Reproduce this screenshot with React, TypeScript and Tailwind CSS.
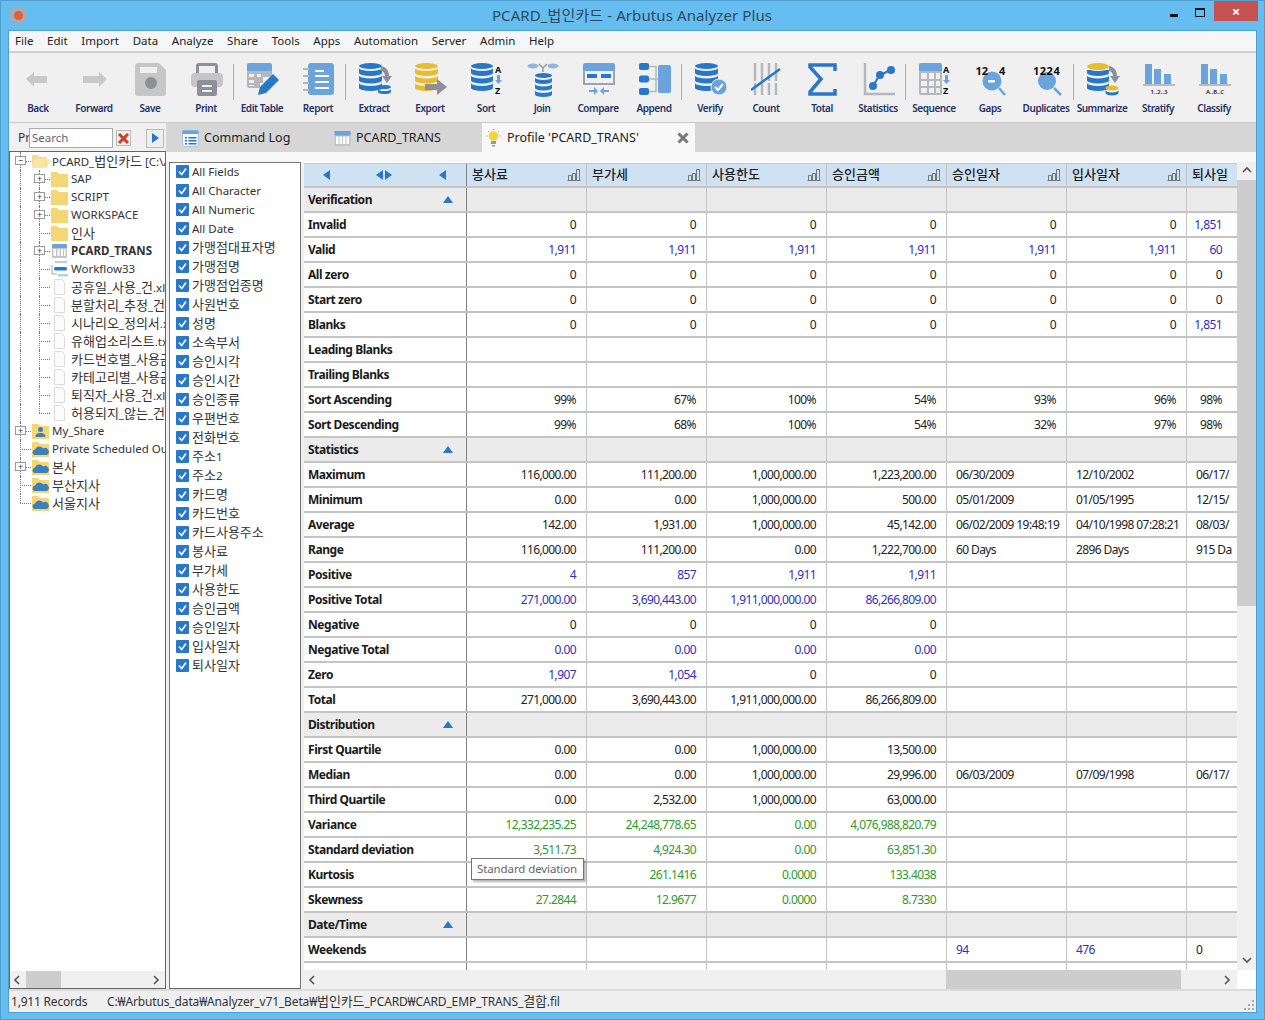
import type { ReactNode } from 'react';

const SANS = '"Noto Sans", "Noto Sans CJK KR", sans-serif';
const BLUE = '#2877c8';
const MID = '#6ba3dc';
const GOLD = '#e8bc2e';
const GREY = '#8d9098';

// stacked database drawing, used by most of the toolbar icons
function Db({ x, y, w, c, bands = 3, h = 6 }: { x: number; y: number; w: number; c: string; bands?: number; h?: number }) {
  const r = w / 2;
  const ry = h * 0.5;
  return (
    <g fill={c}>
      <ellipse cx={x + r} cy={y + ry} rx={r} ry={ry} />
      {Array.from({ length: bands }).map((_, i) => {
        const top = y + ry + 2 + i * (h + 1.5);
        return <path key={i} d={`M${x} ${top}a${r} ${ry} 0 0 0 ${w} 0v${h - 1}a${r} ${ry} 0 0 1 -${w} 0z`} />;
      })}
    </g>
  );
}

const Arrow = ({ d, c = GREY }: { d: string; c?: string }) => <path d={d} fill={c} />;

// hangul runs are drawn a size larger than the latin text next to them
function Ko({ text }: { text: string }) {
  return (
    <>
      {text.split(/([가-힣]+)/).map((part, i) =>
        /[가-힣]/.test(part) ? (
          <span key={i} className="text-[13px]">
            {part}
          </span>
        ) : (
          part
        ),
      )}
    </>
  );
}

function SortMark() {
  return (
    <g>
      <text x="24" y="10" fontSize="9" fontWeight="700" fill="#111" fontFamily={SANS}>A</text>
      <path d="M26 12h3v5h2l-3.500 4-3.500-4h2z" fill={MID} />
      <text x="24" y="31" fontSize="9" fontWeight="700" fill="#111" fontFamily={SANS}>Z</text>
    </g>
  );
}

function BarsMark({ label }: { label: string }) {
  return (
    <g>
      <rect x="2" y="1" width="7" height="20" fill={MID} />
      <rect x="11" y="6" width="7" height="15" fill={MID} />
      <rect x="21" y="11" width="7" height="10" fill={MID} />
      <rect x="0" y="21" width="32" height="2" fill="#bbb" />
      <text x="16" y="31" fontSize="6" fontWeight="600" textAnchor="middle" fill="#222" fontFamily={SANS}>{label}</text>
    </g>
  );
}

const TOOL_ICONS: Record<string, ReactNode> = {
  Back: <Arrow c="#c9c9c9" d="M3 16l8-7v4h13v7H11v4z" />,
  Forward: <Arrow c="#c9c9c9" d="M28 16l-8-7v4H4v7h16v4z" />,
  Save: (
    <g>
      <path d="M3 0h21l7 7v23a3 3 0 0 1-3 3H3a3 3 0 0 1-3-3V3a3 3 0 0 1 3-3z" fill="#c6c6c6" />
      <rect x="5" y="4" width="17" height="6" fill="#f0f0f0" />
      <circle cx="16" cy="20" r="6" fill={GREY} />
    </g>
  ),
  Print: (
    <g>
      <path d="M5 11V3a3 3 0 0 1 3-3h16a3 3 0 0 1 3 3v8h-3V3H8v8z" fill={GREY} />
      <rect x="0" y="10" width="32" height="14" rx="4" fill="#c6c6c6" />
      <rect x="6" y="17" width="20" height="16" rx="2" fill={GREY} />
      <rect x="11" y="22" width="10" height="2" fill="#f0f0f0" />
      <rect x="11" y="27" width="10" height="2" fill="#f0f0f0" />
    </g>
  ),
  'Edit Table': (
    <g>
      <path d="M2 0h21a2 2 0 0 1 2 2v6H0V2a2 2 0 0 1 2-2z" fill={MID} />
      <path d="M0 8h25v6h-9v6h-3v5H2a2 2 0 0 1-2-2zM2 11v3h5v-3zM10 11v3h4v-3zM2 17v3h5v-3zM2 22v1h5v-1z" fill="#b5b7bb" fillRule="evenodd" />
      <path d="M11 32l2-8 13-13 6 6-13 13z" fill={BLUE} />
    </g>
  ),
  Report: (
    <g>
      <rect x="5" y="0" width="26" height="32" rx="3" fill={MID} />
      <rect x="12" y="7" width="9" height="2" fill="#fff" />
      <rect x="12" y="12" width="14" height="2" fill="#fff" />
      <rect x="12" y="18" width="14" height="2" fill="#fff" />
      <rect x="12" y="24" width="14" height="2" fill="#fff" />
      <path d="M0 5h6v2H0zM0 12h6v2H0zM0 19h6v2H0zM0 26h6v2H0z" fill="#b5b7bb" />
    </g>
  ),
  Extract: (
    <g>
      <Db x={0} y={0} w={23} c={BLUE} />
      <Arrow d="M22 3c5 1 8 4 8 10h3l-5 7-5-7h3c0-3-2-5-4-5z" />
      <Db x={19} y={22} w={13} c={BLUE} bands={1} h={4} />
    </g>
  ),
  Export: (
    <g>
      <Db x={0} y={0} w={23} c={GOLD} />
      <Arrow d="M10 21h12v-5l10 8-10 8v-5H10z" />
    </g>
  ),
  Sort: (
    <g>
      <Db x={0} y={0} w={22} c={BLUE} />
      <SortMark />
    </g>
  ),
  Join: (
    <g>
      <ellipse cx="6" cy="3" rx="5.500" ry="2.500" fill="#8fb6e0" />
      <ellipse cx="26" cy="3" rx="5.500" ry="2.500" fill="#8fb6e0" />
      <path d="M12 1l4 4 4-4M16 5v4" stroke="#999" strokeWidth="1.500" fill="none" />
      <Db x={8} y={10} w={17} c={BLUE} h={5} />
    </g>
  ),
  Compare: (
    <g>
      <path d="M3 0h26a3 3 0 0 1 3 3v19H0V3a3 3 0 0 1 3-3z" fill="#9fa3ab" />
      <rect x="0" y="0" width="32" height="8" rx="3" fill={MID} />
      <rect x="2" y="8" width="28" height="12" fill="#f0f0f0" />
      <rect x="4" y="11" width="10" height="4" fill={BLUE} />
      <rect x="18" y="11" width="10" height="4" fill={BLUE} />
      <path d="M6 27h5v-3l4 4-4 4v-3H6zM26 27h-5v-3l-4 4 4 4v-3h5z" fill={MID} />
    </g>
  ),
  Append: (
    <g>
      <rect x="0" y="0" width="10" height="7" rx="2" fill={BLUE} />
      <rect x="0" y="12.500" width="10" height="7" rx="2" fill={BLUE} />
      <rect x="0" y="25" width="10" height="7" rx="2" fill={BLUE} />
      <path d="M10 3.500h7v25h-7M10 16h10" stroke="#b5b7bb" strokeWidth="1.500" fill="none" />
      <rect x="19" y="2" width="13" height="28" rx="2" fill={MID} />
    </g>
  ),
  Verify: (
    <g>
      <Db x={0} y={0} w={23} c={BLUE} />
      <circle cx="24" cy="24" r="8" fill={MID} stroke="#f0f0f0" strokeWidth="1" />
      <path d="M20 24l3 3 5-6" stroke="#fff" strokeWidth="2" fill="none" />
    </g>
  ),
  Count: (
    <g>
      <path d="M4 0v32M11 0v32M18 0v32M25 0v32" stroke="#b5b7bb" strokeWidth="2.500" strokeDasharray="18 2 12" />
      <path d="M0 27L29 6" stroke={BLUE} strokeWidth="2.500" />
    </g>
  ),
  Total: <path d="M28 8V2H3v2l11 12L3 29v2h25v-5" stroke={BLUE} strokeWidth="3.500" fill="none" />,
  Statistics: (
    <g>
      <path d="M2 0v31h30" stroke="#b5b7bb" strokeWidth="2.500" fill="none" />
      <path d="M10 23l6-10 11-6" stroke={BLUE} strokeWidth="2" fill="none" />
      <circle cx="10" cy="23" r="4" fill={BLUE} />
      <circle cx="17" cy="12" r="4" fill={BLUE} />
      <circle cx="28" cy="7" r="4" fill={BLUE} />
    </g>
  ),
  Sequence: (
    <g>
      <path d="M2 0h19a2 2 0 0 1 2 2v6H0V2a2 2 0 0 1 2-2z" fill={MID} />
      <path d="M0 8h23v22a2 2 0 0 1-2 2H2a2 2 0 0 1-2-2z" fill="#b5b7bb" />
      <path d="M2 10h6v6H2zM10 10h5v6h-5zM17 10h4v6h-4zM2 18h6v5H2zM10 18h5v5h-5zM17 18h4v5h-4zM2 25h6v5H2zM10 25h5v5h-5zM17 25h4v5h-4z" fill="#f0f0f0" />
      <SortMark />
    </g>
  ),
  Gaps: (
    <g>
      <circle cx="17" cy="18" r="9.500" fill={MID} />
      <rect x="13" y="17" width="7" height="2.500" rx="1" fill="#fff" />
      <path d="M24 25l6 7" stroke={MID} strokeWidth="2.500" />
      <text x="0.500" y="12" fontSize="11" fontWeight="700" fill="#111" fontFamily={SANS}>12</text>
      <text x="24" y="12" fontSize="11" fontWeight="700" fill="#111" fontFamily={SANS}>4</text>
    </g>
  ),
  Duplicates: (
    <g>
      <circle cx="16" cy="18" r="9" fill={MID} />
      <path d="M23 25l7 7" stroke={MID} strokeWidth="2.500" />
      <text x="2" y="12" fontSize="11" fontWeight="700" letterSpacing="0.500" fill="#111" fontFamily={SANS}>1224</text>
    </g>
  ),
  Summarize: (
    <g>
      <Db x={0} y={0} w={22} c={BLUE} />
      <path d="M0 0h22v7H0z" fill="#f0f0f0" />
      <ellipse cx="11" cy="3.500" rx="11" ry="3.500" fill={GOLD} />
      <Arrow d="M22 3c5 1 8 4 8 10h3l-5 7-5-7h3c0-3-2-5-4-5z" />
      <ellipse cx="25" cy="25" rx="6.500" ry="2.500" fill={GOLD} />
      <path d="M18.500 27a6.500 2.500 0 0 0 13 0v3a6.500 2.500 0 0 1-13 0z" fill={BLUE} />
    </g>
  ),
  Stratify: <BarsMark label="1..2..3" />,
  Classify: <BarsMark label="A..B..C" />,
};

const TOOLS: { label: string; sep?: boolean }[] = [
  { label: 'Back' }, { label: 'Forward' }, { label: 'Save' }, { label: 'Print', sep: true },
  { label: 'Edit Table' }, { label: 'Report', sep: true }, { label: 'Extract' }, { label: 'Export' },
  { label: 'Sort' }, { label: 'Join' }, { label: 'Compare' }, { label: 'Append', sep: true },
  { label: 'Verify' }, { label: 'Count' }, { label: 'Total' }, { label: 'Statistics', sep: true },
  { label: 'Sequence' }, { label: 'Gaps' }, { label: 'Duplicates', sep: true }, { label: 'Summarize' },
  { label: 'Stratify' }, { label: 'Classify' },
];

const MENU = ['File', 'Edit', 'Import', 'Data', 'Analyze', 'Share', 'Tools', 'Apps', 'Automation', 'Server', 'Admin', 'Help'];

const FIELDS = ['All Fields', 'All Character', 'All Numeric', 'All Date', '가맹점대표자명', '가맹점명', '가맹점업종명', '사원번호', '성명', '소속부서', '승인시각', '승인시간', '승인종류', '우편번호', '전화번호', '주소1', '주소2', '카드명', '카드번호', '카드사용주소', '봉사료', '부가세', '사용한도', '승인금액', '승인일자', '입사일자', '퇴사일자'];

const COLUMNS = ['봉사료', '부가세', '사용한도', '승인금액', '승인일자', '입사일자', '퇴사일'];

type TreeItem = { label: string; level: 0 | 1; kind: 'open' | 'folder' | 'table' | 'flow' | 'file' | 'user' | 'cloud'; plus?: boolean; minus?: boolean; bold?: boolean };

const TREE: TreeItem[] = [
  { label: 'PCARD_법인카드 [C:\\Arbutus]', level: 0, kind: 'open', minus: true },
  { label: 'SAP', level: 1, kind: 'folder', plus: true },
  { label: 'SCRIPT', level: 1, kind: 'folder', plus: true },
  { label: 'WORKSPACE', level: 1, kind: 'folder', plus: true },
  { label: '인사', level: 1, kind: 'folder' },
  { label: 'PCARD_TRANS', level: 1, kind: 'table', plus: true, bold: true },
  { label: 'Workflow33', level: 1, kind: 'flow' },
  { label: '공휴일_사용_건.xlsx', level: 1, kind: 'file' },
  { label: '분할처리_추정_건.xlsx', level: 1, kind: 'file' },
  { label: '시나리오_정의서.xlsx', level: 1, kind: 'file' },
  { label: '유해업소리스트.txt', level: 1, kind: 'file' },
  { label: '카드번호별_사용금액.xlsx', level: 1, kind: 'file' },
  { label: '카테고리별_사용금액.xlsx', level: 1, kind: 'file' },
  { label: '퇴직자_사용_건.xlsx', level: 1, kind: 'file' },
  { label: '허용되지_않는_건.xlsx', level: 1, kind: 'file' },
  { label: 'My_Share', level: 0, kind: 'user', plus: true },
  { label: 'Private Scheduled Output', level: 0, kind: 'cloud' },
  { label: '본사', level: 0, kind: 'cloud', plus: true },
  { label: '부산지사', level: 0, kind: 'cloud' },
  { label: '서울지사', level: 0, kind: 'cloud' },
];

type Tone = 'k' | 'b' | 'g';
type Row = { label: string; section?: boolean; tone?: Tone; tones?: Tone[]; left?: number[]; cells?: string[] };

const ROWS: Row[] = [
  { label: 'Verification', section: true },
  { label: 'Invalid', cells: ['0', '0', '0', '0', '0', '0', '1,851'], tones: ['k', 'k', 'k', 'k', 'k', 'k', 'b'] },
  { label: 'Valid', tone: 'b', cells: ['1,911', '1,911', '1,911', '1,911', '1,911', '1,911', '60'] },
  { label: 'All zero', cells: ['0', '0', '0', '0', '0', '0', '0'] },
  { label: 'Start zero', cells: ['0', '0', '0', '0', '0', '0', '0'] },
  { label: 'Blanks', cells: ['0', '0', '0', '0', '0', '0', '1,851'], tones: ['k', 'k', 'k', 'k', 'k', 'k', 'b'] },
  { label: 'Leading Blanks' },
  { label: 'Trailing Blanks' },
  { label: 'Sort Ascending', cells: ['99%', '67%', '100%', '54%', '93%', '96%', '98%'] },
  { label: 'Sort Descending', cells: ['99%', '68%', '100%', '54%', '32%', '97%', '98%'] },
  { label: 'Statistics', section: true },
  { label: 'Maximum', left: [4, 5, 6], cells: ['116,000.00', '111,200.00', '1,000,000.00', '1,223,200.00', '06/30/2009', '12/10/2002', '06/17/'] },
  { label: 'Minimum', left: [4, 5, 6], cells: ['0.00', '0.00', '1,000,000.00', '500.00', '05/01/2009', '01/05/1995', '12/15/'] },
  { label: 'Average', left: [4, 5, 6], cells: ['142.00', '1,931.00', '1,000,000.00', '45,142.00', '06/02/2009 19:48:19', '04/10/1998 07:28:21', '08/03/'] },
  { label: 'Range', left: [4, 5, 6], cells: ['116,000.00', '111,200.00', '0.00', '1,222,700.00', '60 Days', '2896 Days', '915 Da'] },
  { label: 'Positive', tone: 'b', cells: ['4', '857', '1,911', '1,911'] },
  { label: 'Positive Total', tone: 'b', cells: ['271,000.00', '3,690,443.00', '1,911,000,000.00', '86,266,809.00'] },
  { label: 'Negative', cells: ['0', '0', '0', '0'] },
  { label: 'Negative Total', tone: 'b', cells: ['0.00', '0.00', '0.00', '0.00'] },
  { label: 'Zero', cells: ['1,907', '1,054', '0', '0'], tones: ['b', 'b', 'k', 'k'] },
  { label: 'Total', cells: ['271,000.00', '3,690,443.00', '1,911,000,000.00', '86,266,809.00'] },
  { label: 'Distribution', section: true },
  { label: 'First Quartile', cells: ['0.00', '0.00', '1,000,000.00', '13,500.00'] },
  { label: 'Median', left: [4, 5, 6], cells: ['0.00', '0.00', '1,000,000.00', '29,996.00', '06/03/2009', '07/09/1998', '06/17/'] },
  { label: 'Third Quartile', cells: ['0.00', '2,532.00', '1,000,000.00', '63,000.00'] },
  { label: 'Variance', tone: 'g', cells: ['12,332,235.25', '24,248,778.65', '0.00', '4,076,988,820.79'] },
  { label: 'Standard deviation', tone: 'g', cells: ['3,511.73', '4,924.30', '0.00', '63,851.30'] },
  { label: 'Kurtosis', tone: 'g', cells: ['', '261.1416', '0.0000', '133.4038'] },
  { label: 'Skewness', tone: 'g', cells: ['27.2844', '12.9677', '0.0000', '8.7330'] },
  { label: 'Date/Time', section: true },
  { label: 'Weekends', left: [4, 5, 6], cells: ['', '', '', '', '94', '476', '0'], tones: ['k', 'k', 'k', 'k', 'b', 'b', 'k'] },
  { label: '' },
];

const TONE_CLASS: Record<Tone, string> = { k: 'text-[#222]', b: 'text-[#2f2fc0]', g: 'text-[#2c9a2c]' };

const colWidth = (i: number) => (i === 6 ? 'w-[50px]' : 'w-[120px]');

function ToolIcon({ label }: { label: string }) {
  return (
    <svg width="33" height="34" viewBox="0 0 33 34" className="ml-[2px]">
      {TOOL_ICONS[label]}
    </svg>
  );
}

function MiniChart() {
  return (
    <svg width="14" height="12" viewBox="0 0 14 12" fill="none" stroke="#777" strokeWidth="1">
      <path d="M.5 11.500h13M1.500 11.500v-5h3v5M5.500 11.500v-7h3v7M9.500 11.500v-11h3v11" />
    </svg>
  );
}

function Triangle({ dir }: { dir: 'left' | 'right' | 'up' }) {
  const d = dir === 'left' ? 'M8 0v10L1 5z' : dir === 'right' ? 'M1 0v10l7-5z' : 'M5 1l5 7H0z';
  return (
    <svg width="9" height="10" viewBox="0 0 9 10" className={dir === 'up' ? 'w-[11px]' : ''}>
      <path d={d} fill={BLUE} />
    </svg>
  );
}

function Chevron({ dir }: { dir: 'left' | 'right' | 'up' | 'down' }) {
  const d = { left: 'M6 1L2 5l4 4', right: 'M2 1l4 4-4 4', up: 'M1 6l4-4 4 4', down: 'M1 2l4 4 4-4' }[dir];
  return (
    <svg width="10" height="10" viewBox="0 0 10 10" fill="none" stroke="#555" strokeWidth="1.600">
      <path d={d} />
    </svg>
  );
}

function TreeIcon({ kind }: { kind: TreeItem['kind'] }) {
  if (kind === 'file') {
    return (
      <svg width="19" height="18" viewBox="0 0 19 18">
        <path d="M4.500 1.500h7l3 3v12h-10z" fill="#fbfbfb" stroke="#dcdcdc" />
      </svg>
    );
  }
  if (kind === 'table') {
    return (
      <svg width="19" height="18" viewBox="0 0 19 18">
        <rect x="2" y="2" width="15" height="14" rx="1.500" fill="#c2c4c8" />
        <rect x="2" y="2" width="15" height="4" rx="1" fill={MID} />
        <path d="M3.500 7h2.500v7H3.500zM7.500 7h2v7h-2zM11 7h2v7h-2zM14 7h1.500v7H14z" fill="#fff" />
      </svg>
    );
  }
  if (kind === 'flow') {
    return (
      <svg width="19" height="18" viewBox="0 0 19 18">
        <rect x="5" y="1" width="12" height="2" fill="#b9cfe8" />
        <rect x="4" y="7" width="13" height="3.500" rx="1.500" fill={BLUE} />
        <rect x="8" y="14" width="10" height="2.500" fill="#b9cfe8" />
        <path d="M2 5v9h5" stroke="#aaa" fill="none" />
      </svg>
    );
  }
  if (kind === 'open') {
    return (
      <svg width="19" height="18" viewBox="0 0 19 18">
        <path d="M1 3h6l2 2h7v3H4L1 15z" fill="#f4dc9c" />
        <path d="M4 7h15l-3 9H1z" fill="#f9e3a6" />
      </svg>
    );
  }
  return (
    <svg width="19" height="18" viewBox="0 0 19 18">
      <path d="M1 2h6l2 2h9v13H1z" fill="#f5d675" />
      {kind === 'user' && <path d="M9.500 5a2.500 2.500 0 1 1 0 5 2.500 2.500 0 0 1 0-5zM4.500 15c0-3 2-4 5-4s5 1 5 4z" fill="#3d7fb8" />}
      {kind === 'cloud' && <path d="M3 15a3 3 0 0 1 1-5.500 4.500 4.500 0 0 1 8-1 3.500 3.500 0 0 1 4 6.500z" fill="#3d7fb8" />}
    </svg>
  );
}

function TreeRow({ item, last }: { item: TreeItem; last: boolean }) {
  const markX = item.level === 0 ? 'left-[5px]' : 'left-[24px]';
  return (
    <div className="relative flex h-[18px] items-center whitespace-nowrap leading-none">
      <span className={`absolute left-[10px] top-0 w-0 border-l border-dotted border-[#777] ${last ? 'h-[9px]' : 'h-[18px]'}`} />
      {item.level === 1 && (
        <span className={`absolute left-[29px] top-0 w-0 border-l border-dotted border-[#777] ${item.label.startsWith('허용') ? 'h-[9px]' : 'h-[18px]'}`} />
      )}
      <span className={`absolute top-[9px] h-0 border-t border-dotted border-[#777] ${item.level === 0 ? 'left-[10px] w-[11px]' : 'left-[29px] w-[11px]'}`} />
      {(item.plus || item.minus) && (
        <span className={`absolute top-[4px] flex h-[9px] w-[11px] items-center justify-center border border-[#999] bg-white text-[9px] leading-none text-[#333] ${markX}`}>
          {item.minus ? '−' : '+'}
        </span>
      )}
      <span className={`${item.level === 0 ? 'ml-[21px]' : 'ml-[40px]'} relative flex h-[18px] shrink-0 items-center`}>
        <TreeIcon kind={item.kind} />
      </span>
      <span className={`ml-[2px] text-[11.500px] text-[#333] ${item.bold ? 'font-bold text-[#111]' : ''}`}>
        <Ko text={item.label} />
      </span>
    </div>
  );
}

function GridRow({ row }: { row: Row }) {
  const rowBg = row.section ? 'bg-[#ebebeb]' : 'bg-white';
  return (
    <div className={`flex h-[25px] shrink-0 border-b-2 border-[#c4c4c4] ${rowBg}`}>
      <div className="flex w-[163px] shrink-0 items-center justify-between border-r border-[#808080] pl-[4px] pr-[13px] text-[12px] font-bold tracking-[-0.45px] text-[#1a1a1a]">
        <span>{row.label}</span>
        {row.section && <Triangle dir="up" />}
      </div>
      {COLUMNS.map((_, i) => {
        const left = row.left?.includes(i);
        const tone = row.tones?.[i] ?? row.tone ?? 'k';
        return (
          <div
            key={i}
            className={`flex shrink-0 items-center overflow-hidden whitespace-nowrap text-[12px] tracking-[-0.6px] ${colWidth(i)} ${i < 6 ? 'border-r border-[#c4c4c4]' : ''} ${left ? 'justify-start pl-[9px]' : i === 6 ? 'justify-end pr-[15px]' : 'justify-end pr-[10px]'} ${TONE_CLASS[tone]}`}
          >
            {row.cells?.[i]}
          </div>
        );
      })}
    </div>
  );
}

export default function App() {
  return (
    <div className="flex h-[1020px] w-[1265px] flex-col overflow-hidden border border-[#4f9fd0] bg-[#65bdf0] text-[12px]" style={{ fontFamily: SANS }}>
      {/* title bar */}
      <div className="relative flex h-[29px] shrink-0 items-center justify-center pb-[1px] text-[15px] text-[#2b4a60]">
        <span className="absolute left-[9px] top-[6px] flex h-[16px] w-[16px] items-center justify-center rounded-full border-2 border-[#d89a8a]">
          <span className="h-[9px] w-[9px] rounded-full bg-[#f05a28]" />
        </span>
        <span className="ml-[-1px] tracking-[0.1px]">PCARD_법인카드 - Arbutus Analyzer Plus</span>
        <div className="absolute right-[6px] top-0 flex items-start">
          <span className="mr-[17px] mt-[13px] h-[3px] w-[8px] bg-[#111]" />
          <span className="mr-[9px] mt-[7px] h-[9px] w-[10px] border border-t-2 border-[#111]" />
          <span className="flex h-[20px] w-[44px] items-center justify-center bg-[#c75050] text-[15px] font-bold leading-none text-white">×</span>
        </div>
      </div>

      <div className="mx-[7px] flex min-h-0 flex-1 flex-col border border-[#4f9fd0] bg-[#f0f0f0]">
        {/* menu */}
        <div className="flex h-[20px] shrink-0 items-center gap-[13.700px] bg-[#f5f6f7] pl-[6px] text-[11.500px] text-[#222]">
          {MENU.map((m) => (
            <span key={m}>{m}</span>
          ))}
        </div>

        {/* toolbar */}
        <div className="flex h-[72px] shrink-0 border-b border-[#c8c8c8] border-t-2 border-t-[#d0d0d0] pl-[1px] pt-[10px]">
          {TOOLS.map((t) => (
            <div key={t.label} className="relative flex w-[56px] shrink-0 flex-col items-center">
              <div className="h-[34px]">
                <ToolIcon label={t.label} />
              </div>
              <span className="mt-[4px] whitespace-nowrap text-[10px] font-semibold tracking-[-0.45px] text-[#223366]">{t.label}</span>
              {t.sep && <span className="absolute right-0 top-[1px] h-[36px] w-px bg-[#b0aca8]" />}
            </div>
          ))}
        </div>

        {/* main area */}
        <div className="flex min-h-0 flex-1">
          {/* project pane */}
          <div className="flex w-[157px] shrink-0 flex-col">
            <div className="flex h-[28px] shrink-0 items-center bg-[#f0f0f0] pl-[9px] pt-[2px] text-[12px] text-[#333]">
              <span className="w-[11px] overflow-hidden">Pr</span>
              <div className="flex h-[20px] w-[84px] items-center border border-[#aaa] bg-white pl-[2px] text-[11.500px] text-[#666]">Search</div>
              <div className="ml-[3px] flex h-[16px] w-[15px] items-center justify-center border border-[#bbb] bg-[#eee]">
                <svg width="11" height="11" viewBox="0 0 11 11" stroke="#d23a2a" strokeWidth="3">
                  <path d="M1 1l9 9M10 1l-9 9" />
                </svg>
              </div>
              <div className="ml-[15px] flex h-[19px] w-[18px] items-center justify-center border border-[#bbb] bg-[#eee]">
                <Triangle dir="right" />
              </div>
            </div>
            <div className="flex min-h-0 flex-1 flex-col border border-[#666] bg-white">
              <div className="min-h-0 flex-1 overflow-hidden">
                {TREE.map((item, i) => (
                  <TreeRow key={item.label} item={item} last={i === TREE.length - 1} />
                ))}
              </div>
              <div className="flex h-[17px] shrink-0 items-center bg-[#f0f0f0]">
                <span className="flex w-[16px] justify-center"><Chevron dir="left" /></span>
                <span className="h-full w-[35px] bg-[#cdcdcd]" />
                <span className="flex-1" />
                <span className="flex w-[16px] justify-center"><Chevron dir="right" /></span>
              </div>
            </div>
          </div>

          <div className="flex min-w-0 flex-1 flex-col">
            {/* tabs */}
            <div className="flex h-[29px] shrink-0 items-stretch bg-[#d6d6d6] pt-[1px] text-[12.500px] text-[#222]">
              <div className="flex w-[168px] items-center pl-[16px]">
                <svg width="17" height="17" viewBox="0 0 17 17" className="mr-[5px]">
                  <rect x="0.500" y="0.500" width="16" height="16" rx="1.500" fill="#f4f7fb" stroke="#a9c3e0" />
                  <rect x="0.500" y="0.500" width="16" height="3.500" fill={MID} />
                  <path d="M3 7h2v1.500H3zM6.500 7h8v1.500h-8zM3 10h2v1.500H3zM6.500 10h8v1.500h-8zM3 13h2v1.500H3zM6.500 13h8v1.500h-8z" fill={BLUE} />
                </svg>
                Command Log
              </div>
              <div className="flex w-[148px] items-center">
                <svg width="17" height="17" viewBox="0 0 17 17" className="mr-[5px]">
                  <rect x="0.500" y="1" width="16" height="15" rx="1.500" fill="#c2c4c8" />
                  <rect x="0.500" y="1" width="16" height="4.500" fill={MID} />
                  <path d="M2 6.500h2.500V14H2zM5.500 6.500H8V14H5.500zM9 6.500h2.500V14H9zM12.500 6.500H15V14h-2.500z" fill="#fff" />
                </svg>
                PCARD_TRANS
              </div>
              <div className="mt-[-1px] flex w-[213px] items-center bg-[#f8f8f8] pl-[3px] pt-[1px]">
                <svg width="17" height="19" viewBox="0 0 17 19" className="mr-[5px]">
                  <circle cx="8.500" cy="7" r="4.800" fill="#f6d23c" />
                  <path d="M6 12h5v3H6z" fill="#8e9aa8" />
                  <path d="M7 16h3v1.500H7z" fill={MID} />
                  <path d="M1 7h1.500M14.500 7H16M3 2l1 1M14 2l-1 1M8.500 0v1" stroke="#c5a83a" />
                </svg>
                Profile 'PCARD_TRANS'
                <svg width="12" height="12" viewBox="0 0 12 12" stroke="#777" strokeWidth="3" className="ml-[38px]">
                  <path d="M1.500 1.500l9 9M10.500 1.500l-9 9" />
                </svg>
              </div>
            </div>
            <div className="h-[10px] shrink-0 bg-[#f8f8f8]" />

            <div className="flex min-h-0 flex-1 pl-[3px]">
              {/* field list */}
              <div className="w-[132px] shrink-0 overflow-hidden border border-b-[#666] border-[#777] bg-white pl-[6px]">
                <div className="-mt-px">
                  {FIELDS.map((f) => (
                    <div key={f} className="flex h-[19px] items-center gap-[3px] whitespace-nowrap text-[11.500px] leading-none text-[#333]">
                      <svg width="13" height="13" viewBox="0 0 13 13" className="shrink-0">
                        <rect width="13" height="13" rx="1" fill={BLUE} />
                        <path d="M3 6.500l2.700 3L10 3.500" stroke="#fff" strokeWidth="1.600" fill="none" />
                      </svg>
                      <span><Ko text={f} /></span>
                    </div>
                  ))}
                </div>
              </div>

              {/* profile grid */}
              <div className="ml-[3px] flex min-w-0 flex-1 flex-col bg-white">
                <div className="flex min-h-0 flex-1">
                  <div className="relative min-w-0 flex-1 overflow-hidden pt-[1px]">
                    <div className="flex h-[25px] border-b-2 border-t border-[#c4c4c4] bg-[#cfe2f3]">
                      <div className="flex w-[163px] shrink-0 items-center border-r border-[#808080] pl-[18px]">
                        <Triangle dir="left" />
                        <span className="ml-[44px] flex"><Triangle dir="left" /><Triangle dir="right" /></span>
                        <span className="ml-[45px]"><Triangle dir="left" /></span>
                      </div>
                      {COLUMNS.map((c, i) => (
                        <div key={c} className={`flex shrink-0 items-center justify-between pl-[5px] pr-[5px] text-[13px] font-medium text-[#222] ${colWidth(i)} ${i < 6 ? 'border-r border-[#c4c4c4]' : ''}`}>
                          <span>{c}</span>
                          {i < 6 && <MiniChart />}
                        </div>
                      ))}
                    </div>
                    {ROWS.map((r, i) => (
                      <GridRow key={`${r.label}${i}`} row={r} />
                    ))}
                    {/* hover tooltip over the Kurtosis row */}
                    <div className="absolute left-[167px] top-[696px] flex h-[22px] w-[113px] items-center border border-[#767676] bg-white pl-[5px] text-[11.500px] tracking-[-0.1px] text-[#666] shadow-[2px_2px_2px_rgba(0,0,0,0.3)]">
                      Standard deviation
                    </div>
                  </div>
                  {/* vertical scrollbar */}
                  <div className="flex w-[19px] shrink-0 flex-col bg-[#f0f0f0]">
                    <span className="flex h-[18px] items-center justify-center"><Chevron dir="up" /></span>
                    <span className="h-[426px] bg-[#cdcdcd]" />
                    <span className="flex-1" />
                    <span className="flex h-[18px] items-center justify-center"><Chevron dir="down" /></span>
                  </div>
                </div>
                {/* horizontal scrollbar */}
                <div className="flex h-[19px] shrink-0">
                  <div className="flex flex-1 items-center bg-[#f0f0f0]">
                    <span className="flex w-[18px] justify-center"><Chevron dir="left" /></span>
                    <span className="ml-[624px] h-full w-[235px] bg-[#cdcdcd]" />
                    <span className="flex-1" />
                    <span className="flex w-[18px] justify-center"><Chevron dir="right" /></span>
                  </div>
                  <div className="w-[19px] bg-white" />
                </div>
              </div>
            </div>
          </div>
        </div>

        {/* status bar */}
        <div className="relative flex h-[23px] shrink-0 items-center border-t-2 border-[#dcdcdc] bg-[#efefef] pl-[2px] text-[12px] text-[#333]">
          <span className="w-[96px] tracking-[-0.2px]">1,911 Records</span>
          <span className="tracking-[-0.14px]"><Ko text="C:₩Arbutus_data₩Analyzer_v71_Beta₩법인카드_PCARD₩CARD_EMP_TRANS_결합.fil" /></span>
          <svg width="10" height="10" viewBox="0 0 10 10" fill="#aaa" className="absolute bottom-[2px] right-[2px]">
            <path d="M8 0h2v2H8zM4 4h2v2H4zM8 4h2v2H8zM0 8h2v2H0zM4 8h2v2H4zM8 8h2v2H8z" />
          </svg>
        </div>
      </div>
      <div className="h-[6px] shrink-0" />
    </div>
  );
}
